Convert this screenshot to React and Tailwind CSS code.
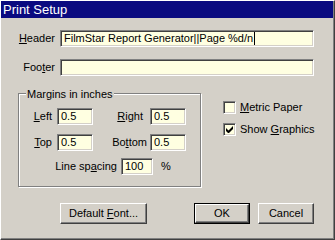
const font = { fontFamily: '"Liberation Sans", Arial, sans-serif' };

const Field = ({ value = '', width, caret = false, className = '' }) => (
    <div
        className={`h-[17px] bg-[#ffffe1] border-t border-l border-t-[#808080] border-l-[#808080] border-b border-r border-b-white border-r-white shadow-[inset_1px_1px_0_#404040,inset_-1px_-1px_0_#d4d0c8] pl-[3px] flex items-center text-[11px] text-black leading-none ${className}`}
        style={{ width }}
    >
        <span>{value}</span>
        {caret && <span className="w-px h-[13px] bg-black ml-px" />}
    </div>
);

const Btn = ({ children, isDefault = false, width }) => (
    <div className={isDefault ? 'border border-black' : ''} style={{ width }}>
        <div className={`${isDefault ? 'h-[19px]' : 'h-[21px]'} bg-[#d4d0c8] border-t border-l border-t-white border-l-white border-b border-r border-b-[#404040] border-r-[#404040] shadow-[inset_-1px_-1px_0_#808080] flex items-center justify-center text-[11px] text-black`}>
            <span>{children}</span>
        </div>
    </div>
);

const Check = ({ checked, children }) => (
    <div className="h-[13px] flex items-center gap-[4px] text-[11px] text-black">
        <div className="w-[13px] h-[13px] bg-[#ffffe1] border-t border-l border-t-[#808080] border-l-[#808080] border-b border-r border-b-white border-r-white shadow-[inset_1px_1px_0_#404040,inset_-1px_-1px_0_#d4d0c8] flex items-center justify-center">
            {checked && (
                <svg width="7" height="7" viewBox="0 0 7 7">
                    <path d="M0 2v3l2 2h1l4-4V0L2.5 4.5z" fill="#000" />
                </svg>
            )}
        </div>
        <span>{children}</span>
    </div>
);

const U = ({ children }) => <span className="underline underline-offset-[1px]">{children}</span>;

export default function App() {
    return (
        <div
            className="w-[335px] h-[240px] bg-[#d4d0c8] border-t border-l border-t-white border-l-white border-b border-r border-b-[#404040] border-r-[#404040] shadow-[inset_-1px_-1px_0_#808080] flex flex-col overflow-hidden"
            style={font}
        >
            {/* title bar */}
            <div className="h-[17px] mr-px bg-[#0a0a80] flex items-center pl-[2px] text-white text-[13px] leading-none">
                Print Setup
            </div>

            {/* header / footer */}
            <div className="flex items-center mt-[12px]">
                <div className="w-[59px] text-right pr-[5px] text-[11px] text-black"><U>H</U>eader</div>
                <Field value="FilmStar Report Generator||Page %d/n" width={254} caret />
            </div>
            <div className="flex items-center mt-[12px]">
                <div className="w-[59px] text-right pr-[5px] text-[11px] text-black">Foo<U>t</U>er</div>
                <Field width={254} />
            </div>

            <div className="flex mt-[17px]">
                {/* margins group */}
                <div className="relative ml-[17px] w-[183px] h-[94px] border border-[#808080] shadow-[inset_1px_1px_0_#fff,1px_1px_0_#fff] text-[11px] text-black">
                    <span className="absolute -top-[8px] left-[7px] bg-[#d4d0c8] px-[1px]">Margins in inches</span>
                    <div className="flex items-center mt-[14px]">
                        <div className="w-[38px] text-right pr-[5px]"><U>L</U>eft</div>
                        <Field value="0.5" width={36} />
                        <div className="w-[57px] text-right pr-[7px]"><U>R</U>ight</div>
                        <Field value="0.5" width={36} />
                    </div>
                    <div className="flex items-center mt-[9px]">
                        <div className="w-[38px] text-right pr-[5px]"><U>T</U>op</div>
                        <Field value="0.5" width={36} />
                        <div className="w-[57px] text-right pr-[3px]">Bo<U>t</U>tom</div>
                        <Field value="0.5" width={36} />
                    </div>
                    <div className="flex items-center mt-[7px]">
                        <div className="w-[102px] text-right pr-[4px]">Line sp<U>a</U>cing</div>
                        <Field value="100" width={32} />
                        <span className="ml-[8px]">%</span>
                    </div>
                </div>

                {/* options */}
                <div className="flex flex-col gap-[9px] ml-[22px] mt-[8px]">
                    <Check><U>M</U>etric Paper</Check>
                    <Check checked>Show <U>G</U>raphics</Check>
                </div>
            </div>

            {/* buttons */}
            <div className="flex mt-[16px] pl-[59px]">
                <Btn width={87}>Default <U>F</U>ont...</Btn>
                <div className="ml-[47px]">
                    <Btn isDefault width={56}>OK</Btn>
                </div>
                <div className="ml-[8px]">
                    <Btn width={56}>Cancel</Btn>
                </div>
            </div>
        </div>
    );
}
